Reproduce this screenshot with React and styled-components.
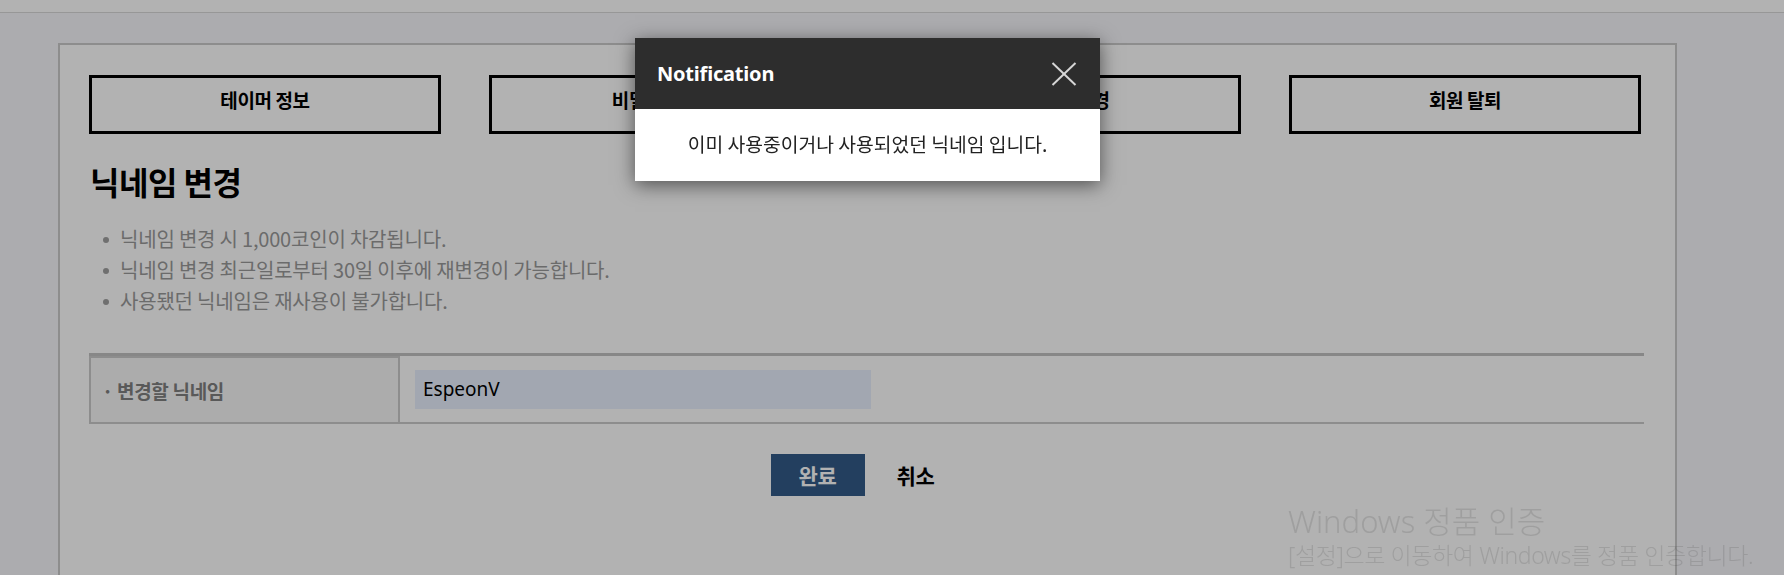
import React, { useState } from "react";
import styled, { createGlobalStyle } from "styled-components";

const GlobalStyle = createGlobalStyle`
  html, body {
    margin: 0;
    padding: 0;
  }
  body {
    background: #f6f7fb;
    font-family: "Noto Sans CJK KR", "Noto Sans", sans-serif;
    color: #000;
    overflow: hidden;
  }
  * { box-sizing: border-box; }
`;

const TopBar = styled.header`
  height: 13px;
  background: #ffffff;
  border-bottom: 1px solid #d9d9d9;
`;

const Main = styled.main`
  padding: 30px 0 0 58px;
`;

const Panel = styled.section`
  width: 1619px;
  min-height: 700px;
  background: #fff;
  border: 2px solid #cbcbcb;
  padding: 30px 29px 0 29px;
`;

const TabRow = styled.nav`
  display: grid;
  grid-template-columns: repeat(4, 352px);
  column-gap: 48px;
`;

const TabButton = styled.button`
  height: 59px;
  border: 3px solid #000;
  background: #fff;
  font-family: inherit;
  font-size: 19px;
  font-weight: 700;
  color: #000;
  cursor: pointer;
  padding: 0 0 11px;
  letter-spacing: -0.4px;
`;

const Title = styled.h2`
  margin: 30px 0 0 1px;
  font-size: 32px;
  line-height: 35px;
  font-weight: 700;
  letter-spacing: -0.5px;
`;

const Notes = styled.ul`
  list-style: none;
  margin: 24px 0 0;
  padding: 0 0 0 31px;
`;

const Note = styled.li`
  position: relative;
  font-size: 20px;
  line-height: 31px;
  color: #9a9a9a;
  letter-spacing: -0.2px;

  &::before {
    content: "";
    position: absolute;
    left: -17px;
    top: 14px;
    width: 6px;
    height: 6px;
    border-radius: 50%;
    background: #a0a0a0;
  }
`;

const FormTable = styled.div`
  margin-top: 37px;
  display: flex;
  border-top: 3px solid #c2c2c2;
  border-bottom: 2px solid #cbcbcb;
  width: 1555px;
`;

const LabelCell = styled.div`
  width: 311px;
  height: 66px;
  display: flex;
  align-items: center;
  padding-left: 11px;
  background: #f7f7f7;
  border: 2px solid #cbcbcb;
  border-bottom: none;
  font-size: 19px;
  font-weight: 700;
  color: #808080;
  letter-spacing: -0.3px;
`;

const Dot = styled.span`
  margin-right: 4px;
  font-weight: 700;
`;

const ValueCell = styled.div`
  flex: 1;
  display: flex;
  align-items: center;
  padding-left: 15px;
`;

const NameInput = styled.input`
  width: 456px;
  height: 39px;
  border: none;
  outline: none;
  background: #e8f0fe;
  padding: 0 8px;
  font-family: "Noto Sans", "Noto Sans CJK KR", sans-serif;
  font-size: 19px;
  color: #000;
`;

const Actions = styled.div`
  display: flex;
  justify-content: center;
  gap: 4px;
  margin-top: 30px;
  width: 1555px;
`;

const ActionButton = styled.button`
  width: 94px;
  height: 42px;
  border: none;
  background: ${(p) => (p.$primary ? "#335b88" : "transparent")};
  color: ${(p) => (p.$primary ? "#fff" : "#000")};
  font-family: inherit;
  font-size: 21px;
  font-weight: 700;
  cursor: pointer;
  padding: 0;
  letter-spacing: -0.3px;
`;

const Dim = styled.div`
  position: fixed;
  inset: 0;
  background: rgba(0, 0, 0, 0.3);
`;

const Dialog = styled.div`
  position: fixed;
  left: 635px;
  top: 38px;
  width: 465px;
  background: #fff;
  box-shadow: 0 4px 18px rgba(0, 0, 0, 0.55);
`;

const DialogHead = styled.div`
  height: 71px;
  background: #2d2d2d;
  display: flex;
  align-items: center;
  justify-content: space-between;
  padding: 0 22px 0 22px;
`;

const DialogTitle = styled.h3`
  margin: 0;
  font-family: "Noto Sans", sans-serif;
  font-size: 20px;
  font-weight: 700;
  color: #fff;
  letter-spacing: -0.2px;
`;

const CloseButton = styled.button`
  width: 28px;
  height: 28px;
  border: none;
  background: transparent;
  padding: 0;
  display: flex;
  align-items: center;
  justify-content: center;
  cursor: pointer;
`;

const DialogBody = styled.div`
  height: 72px;
  display: flex;
  align-items: center;
  justify-content: center;
  font-size: 19.3px;
  color: #222;
  padding-bottom: 2px;
`;

/* OS activation notice drawn over everything in the lower right */
const Watermark = styled.div`
  position: fixed;
  left: 1288px;
  top: 501px;
  white-space: nowrap;
  color: rgba(60, 60, 60, 0.16);
  pointer-events: none;
`;

const WatermarkTitle = styled.div`
  font-family: "Noto Sans", "Noto Sans CJK KR", sans-serif;
  font-weight: 300;
  font-size: 31px;
  line-height: 40px;
`;

const WatermarkText = styled.div`
  font-family: "Noto Sans", "Noto Sans CJK KR", sans-serif;
  font-weight: 300;
  font-size: 23px;
  line-height: 28px;
  letter-spacing: -0.4px;
`;

const tabs = ["테이머 정보", "비밀번호 변경", "닉네임 변경", "회원 탈퇴"];

const notes = [
  "닉네임 변경 시 1,000코인이 차감됩니다.",
  "닉네임 변경 최근일로부터 30일 이후에 재변경이 가능합니다.",
  "사용됐던 닉네임은 재사용이 불가합니다.",
];

export default function App() {
  const [nickname, setNickname] = useState("EspeonV");
  const [open, setOpen] = useState(true);

  return (
    <>
      <GlobalStyle />
      <TopBar />
      <Main>
        <Panel>
          <TabRow>
            {tabs.map((t) => (
              <TabButton key={t}>{t}</TabButton>
            ))}
          </TabRow>
          <Title>닉네임 변경</Title>
          <Notes>
            {notes.map((n) => (
              <Note key={n}>{n}</Note>
            ))}
          </Notes>
          <FormTable>
            <LabelCell>
              <Dot>·</Dot>변경할 닉네임
            </LabelCell>
            <ValueCell>
              <NameInput value={nickname} onChange={(e) => setNickname(e.target.value)} />
            </ValueCell>
          </FormTable>
          <Actions>
            <ActionButton $primary>완료</ActionButton>
            <ActionButton>취소</ActionButton>
          </Actions>
        </Panel>
      </Main>

      {open && (
        <>
          <Dim />
          <Dialog>
            <DialogHead>
              <DialogTitle>Notification</DialogTitle>
              <CloseButton onClick={() => setOpen(false)}>
                <svg width="26" height="24" viewBox="0 0 26 24">
                  <line x1="1.5" y1="1" x2="24.5" y2="23" stroke="#d6d6d6" strokeWidth="2" />
                  <line x1="24.5" y1="1" x2="1.5" y2="23" stroke="#d6d6d6" strokeWidth="2" />
                </svg>
              </CloseButton>
            </DialogHead>
            <DialogBody>이미 사용중이거나 사용되었던 닉네임 입니다.</DialogBody>
          </Dialog>
        </>
      )}

      <Watermark>
        <WatermarkTitle>Windows 정품 인증</WatermarkTitle>
        <WatermarkText>[설정]으로 이동하여 Windows를 정품 인증합니다.</WatermarkText>
      </Watermark>
    </>
  );
}
